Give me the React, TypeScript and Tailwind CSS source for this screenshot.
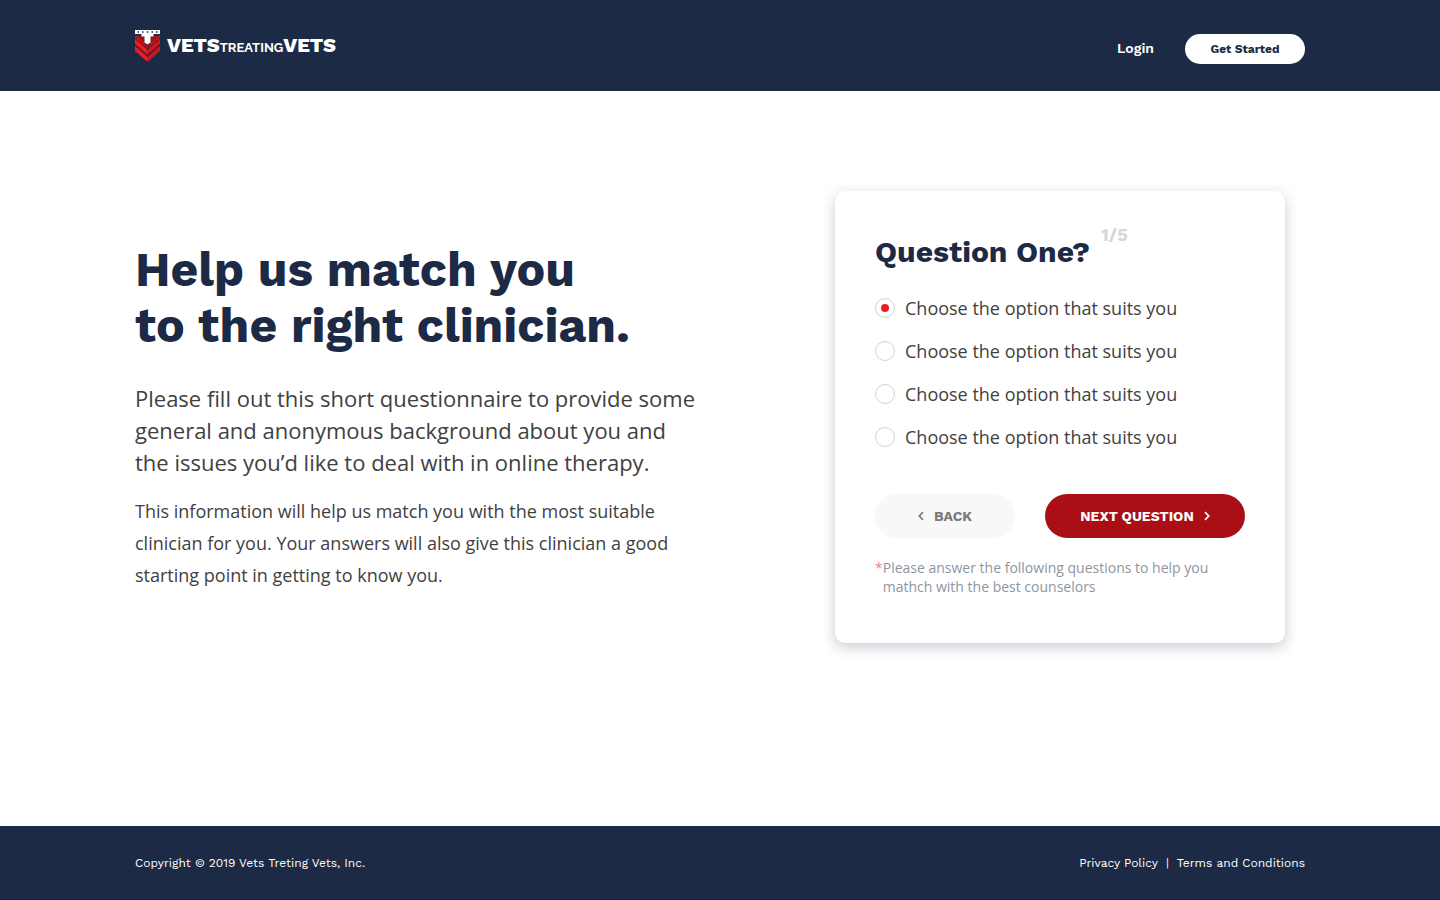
import { useState } from "react";

const options = [1, 2, 3, 4];

function Shield() {
  return (
    <svg width="25" height="32" viewBox="0 0 25 32" aria-hidden="true" className="shrink-0">
      <path d="M0 5.500H7L9.500 7.500V13L12.500 15.500L15.500 13V7.500L18 5.500H25V9L12.500 19.500L0 9Z" fill="#9c1118" />
      <path d="M0 5.500L9.500 13V15.500L0 7.500ZM25 5.500L15.500 13V15.500L25 7.500Z" fill="#c4161c" />
      <path d="M0 9L12.500 20V25L0 14Z" fill="#ee1c24" />
      <path d="M25 9L12.500 20V25L25 14Z" fill="#c9181f" />
      <path d="M0 14L12.500 25V27L0 16ZM25 14L12.500 25V27L25 16Z" fill="#6d1621" />
      <path d="M0 16L12.500 27V32L0 21Z" fill="#ee1c24" />
      <path d="M25 16L12.500 27V32L25 21Z" fill="#c9181f" />
      <path d="M0 0H25V4H18.500V6.500H15.500V12.500L12.500 14.500L9.500 12.500V6.500H6.500V4H0Z" fill="#fff" />
      <path d="M2.500 2h1.500M7 2h1.500M11.750 2h1.500M16.500 2h1.500M21 2h1.500" stroke="#1d2a45" strokeWidth="1.300" />
    </svg>
  );
}

function Chevron({ left = false }: { left?: boolean }) {
  return (
    <svg width="6" height="10" viewBox="0 0 6 10" fill="none" stroke="currentColor" strokeWidth="1.700" aria-hidden="true">
      <path d={left ? "M5 1.200L1.300 5L5 8.800" : "M1 1.200L4.700 5L1 8.800"} />
    </svg>
  );
}

export default function App() {
  const [selected, setSelected] = useState(1);
  return (
    <div className="flex min-h-screen flex-col bg-white font-['Work_Sans','Inter',sans-serif] text-[#1d2a45]">
      <header className="bg-[#1d2a45] px-6 pt-[30px] pb-[27px] text-white">
        <div className="mx-auto flex max-w-[1170px] items-start justify-between">
          <a href="#" className="flex items-start gap-[7px]">
            <Shield />
            <span className="text-[20px] leading-[30px] font-extrabold whitespace-nowrap">
              VETS<span className="font-['Raleway','Lato',sans-serif] text-[13px] leading-none font-bold">TREATING</span>VETS
            </span>
          </a>
          <nav className="flex items-start gap-[31px] pt-1">
            <a href="#" className="text-[14px] leading-7 font-semibold">Login</a>
            <button type="button" className="h-[30px] w-[120px] rounded-full bg-white text-[12px] font-bold text-[#1d2a45]">
              Get Started
            </button>
          </nav>
        </div>
      </header>

      <main className="flex-1 px-6 pt-[100px] pb-12">
        <div className="mx-auto flex max-w-[1170px] flex-wrap items-start justify-between gap-8 lg:pr-5">
          <section className="max-w-[580px] pt-[51px]">
            <h1 className="text-[48px] leading-[56px] font-bold">
              Help us match you
              <br />
              to the right clinician.
            </h1>
            <div className="font-['Open_Sans',sans-serif] text-[#414141]">
              <p className="mt-7 text-[22px] leading-8">
                Please fill out this short questionnaire to provide some general and anonymous background about you and
                <br />
                the issues you’d like to deal with in online therapy.
              </p>
              <p className="mt-[17px] max-w-[550px] text-[18px] leading-8">
                This information will help us match you with the most suitable clinician for you. Your answers will also
                give this clinician a good starting point in getting to know you.
              </p>
            </div>
          </section>

          <form
            className="w-full max-w-[450px] rounded-[10px] bg-white px-10 pt-9 pb-[47px] shadow-[0_4px_14px_rgba(29,42,69,0.25)]"
            onSubmit={(e) => e.preventDefault()}
          >
            <div className="flex items-start gap-[11px]">
              <h2 id="question" className="pt-[7px] text-[30px] leading-9 font-bold">Question One?</h2>
              <span className="text-[18px] leading-4 font-bold text-[#d8d8d8]">1/5</span>
            </div>
            <fieldset
              aria-labelledby="question"
              className="mt-[26px] flex flex-col gap-[19px] font-['Open_Sans',sans-serif] text-[18px] leading-6 text-[#414141]"
            >
              {options.map((option) => (
                <label key={option} className="flex items-center gap-[10px]">
                  <input
                    type="radio"
                    name="answer"
                    checked={selected === option}
                    onChange={() => setSelected(option)}
                    className="grid size-5 shrink-0 appearance-none place-items-center rounded-full border border-[#d3d3d3] bg-white before:size-2 before:rounded-full checked:before:bg-[#ed1c24]"
                  />
                  Choose the option that suits you
                </label>
              ))}
            </fieldset>
            <div className="mt-[45px] flex gap-[30px] text-[14px] font-bold">
              <button type="button" className="flex h-11 w-[140px] items-center justify-center gap-[10px] rounded-full bg-[#f8f8f8] text-[#7b7b7b]">
                <Chevron left />
                BACK
              </button>
              <button type="submit" className="flex h-11 flex-1 items-center justify-center gap-[10px] rounded-full bg-[#a90f14] text-white">
                NEXT QUESTION
                <Chevron />
              </button>
            </div>
            <p className="mt-5 flex font-['Open_Sans',sans-serif] text-[14px] leading-[19px] text-[#8e95a2]">
              <span className="text-[#f47e83]">*</span>
              <span>
                Please answer the following questions to help you
                <br />
                mathch with the best counselors
              </span>
            </p>
          </form>
        </div>
      </main>

      <footer className="border-b border-[#142039] bg-[#1d2a45] px-6 pt-7 pb-[27px] text-[12px] leading-[18px] text-white">
        <div className="mx-auto flex max-w-[1170px] justify-between">
          <p>Copyright © 2019 Vets Treting Vets, Inc.</p>
          <nav className="flex gap-2">
            <a href="#">Privacy Policy</a>
            <span>|</span>
            <a href="#">Terms and Conditions</a>
          </nav>
        </div>
      </footer>
    </div>
  );
}
